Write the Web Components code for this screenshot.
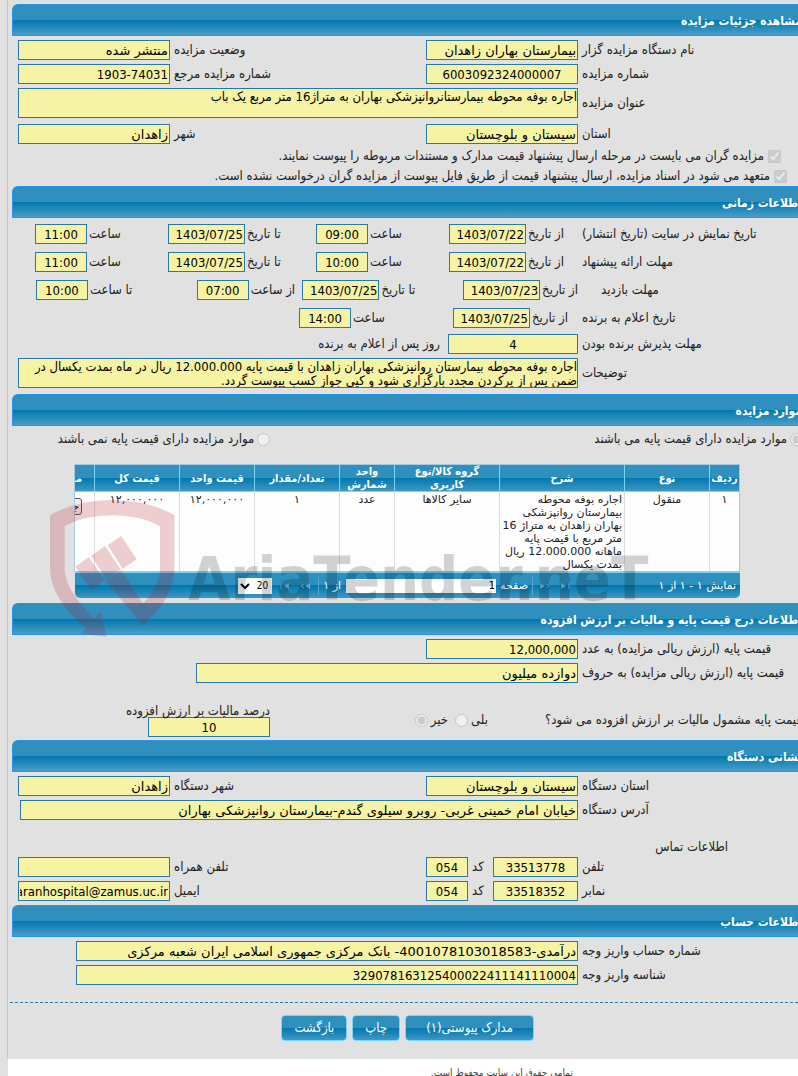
<!DOCTYPE html>
<html lang="fa">
<head>
<meta charset="utf-8">
<title>مشاهده جزئیات مزایده</title>
<style>
html { overflow-x: hidden; background: #fff; }
body { margin: 0; font: 13px/16px "DejaVu Sans Condensed", "DejaVu Sans", sans-serif; color: #222; }
</style>
</head>
<body>
<auction-page></auction-page>
<script>
const BASE = `
*, *::before, *::after { box-sizing: border-box; }
:host { display: block; }
:host([hidden]) { display: none; }
label, span { white-space: nowrap; }
input:not([type=radio]):not([type=checkbox]), textarea {
  display: block; width: 100%; height: 20px; margin: 0; padding: 0 1px; border: 1px solid #2779aa; border-radius: 0;
  background: #f6f3a5; color: #000; font: 13px/18px "DejaVu Sans Condensed", "DejaVu Sans", sans-serif;
  direction: rtl; outline: none; resize: none; overflow: hidden;
}
input.fa:not([type=radio]):not([type=checkbox]) { font-family: "DejaVu Sans", sans-serif; }
input[type=radio], input[type=checkbox] { width: 13px; height: 13px; margin: 0; flex: none; }
`;
class Base extends HTMLElement {
  connectedCallback() {
    if (this.shadowRoot) return;
    const t = document.createElement('template');
    t.innerHTML = `<style>${BASE}${this.css()}</style>${this.html()}`;
    this.attachShadow({ mode: 'open' }).append(t.content.cloneNode(true));
  }
  a(n, d = '') { return this.getAttribute(n) ?? d; }
  css() { return ''; }
  html() { return '<slot></slot>'; }
}

/* Titled block with a glossy bar */
customElements.define('auction-section', class extends Base {
  css() { return `
    h2 { margin: 0; height: 32px; border: 1px solid #2694e8; border-right: 0; border-top-left-radius: 6px;
      background: linear-gradient(#2f90be 0 50%, #0078ae 50%, #4a9dc8 100%);
      font-size: 12px; line-height: 32px; font-weight: bold; color: #fff; white-space: nowrap; }
    div { padding: 2px 0 0 6px; }`; }
  html() { return `<h2>${this.a('heading')}</h2><div><slot></slot></div>`; }
});

/* Two label/field pairs per line */
customElements.define('form-row', class extends Base {
  css() { return `
    :host { display: grid; grid-template-columns: 220fr 152fr 248fr 152fr; column-gap: 4px; align-items: center; min-height: 24px; }
    :host([area]) { padding: 2px 0 4px; }`; }
});

customElements.define('form-field', class extends Base {
  css() { return `
    :host { display: contents; }
    label { text-align: left; min-width: 0; }
    .box { min-width: 0; }
    .wide { grid-column: 2 / -1; display: flex; align-items: center; gap: 8px; }
    textarea { height: 30px; line-height: 14px; padding: 1px 0; }`; }
  html() {
    const v = this.a('value'), w = this.a('width'), al = this.a('align', 'right');
    const fa = /[\u0620-\u06cf]/.test(v) ? 'fa' : '';
    const c = this.hasAttribute('area')
      ? `<textarea id="f" readonly>${v}</textarea>`
      : `<input id="f" class="${fa}" type="text" readonly value="${v}" style="text-align:${al}${w ? `;max-width:${w}px` : ''}">`;
    return `<label for="f">${this.a('label')}</label><div class="box ${this.hasAttribute('wide') ? 'wide' : ''}">${c}<slot></slot></div>`;
  }
});

/* Label hugging a short date or time field */
customElements.define('time-pair', class extends Base {
  css() { return `
    :host { display: flex; align-items: center; justify-content: flex-end; gap: 2px; }
    input { flex: none; }`; }
  html() {
    const d = this.hasAttribute('date');
    return `<label for="t">${this.a('label')}</label><input id="t" type="text" readonly value="${this.a('value')}" style="width:${d ? 77 : 52}px;text-align:${d ? 'right' : 'center'}">`;
  }
});
customElements.define('time-row', class extends Base {
  css() { return `
    :host { display: grid; grid-template-columns: 220fr 560fr; column-gap: 4px; align-items: center; height: 28px; }
    span { text-align: left; }
    .inset { padding-left: 19px; }
    div { display: grid; grid-template-columns: 129fr 133fr 148fr 133fr 17fr; }
    div.visit { grid-template-columns: 114fr 161fr 106fr 161fr 18fr; }
    div.winner { grid-template-columns: 125fr 154fr 281fr; }`; }
  html() {
    const k = this.a('kind');
    return `<span class="${k === 'visit' ? 'inset' : ''}">${this.a('label')}</span><div class="${k}"><slot></slot></div>`;
  }
});

customElements.define('phone-field', class extends Base {
  css() { return `
    :host { display: contents; }
    .main { text-align: left; }
    div { display: flex; align-items: center; gap: 4px; }
    #n { width: 85px; flex: none; text-align: center; }
    #c { width: 42px; flex: none; text-align: center; }
    .code { flex: 1; text-align: left; }`; }
  html() { return `<label class="main" for="n">${this.a('label')}</label><div><input id="n" readonly value="${this.a('value')}"><label class="code" for="c">کد</label><input id="c" readonly value="${this.a('code')}"></div>`; }
});

customElements.define('choice-item', class extends Base {
  css() { return `
    :host { display: flex; align-items: center; gap: 4px; height: 20px; }
    :host([type=radio]) { gap: 3px; }
    :host([reverse]) { flex-direction: row-reverse; justify-content: flex-end; }`; }
  html() { return `<input id="x" type="${this.a('type')}" disabled ${this.hasAttribute('on') ? 'checked' : ''}><label for="x">${this.a('label')}</label>`; }
});

customElements.define('glossy-button', class extends Base {
  css() { return `
    button { height: 26px; padding: 0 ${this.a('pad', '12')}px; border: 1px solid #77d5f7; border-radius: 4px;
      background: linear-gradient(#2f90be 0 50%, #0078ae 50%, #3f97c4 100%);
      color: #fff; font: 13px/22px "DejaVu Sans Condensed", "DejaVu Sans", sans-serif; direction: rtl; white-space: nowrap; display: block; }`; }
  html() { return `<button type="button"><slot></slot></button>`; }
});

/* Items table with its pager */
customElements.define('goods-grid', class extends Base {
  css() { return `
    :host { margin: 15px 62px 5px 56px; font: 11px/13px "DejaVu Sans", sans-serif; }
    .view { overflow: hidden; border: 1px solid #a6c9e2; border-bottom: 0; background: #fdfdfd; }
    table { width: 713px; table-layout: fixed; border-collapse: separate; border-spacing: 0; }
    th { height: 27px; padding: 0; border-left: 1px solid #77d5f7; border-bottom: 1px solid #77d5f7; color: #fff; font: bold 11px/13px "DejaVu Sans Condensed", "DejaVu Sans", sans-serif;
      background: linear-gradient(#2f90be 0 50%, #0078ae 50%, #3f97c4 100%); }
    td { height: 79px; padding: 1px 2px 0; vertical-align: top; text-align: center; border-left: 1px solid #ddd; color: #222; }
    td.desc { text-align: right; white-space: nowrap; }
    td button { float: right; margin: 5px 10px 0 0; height: 17px; padding: 0 2px; font: inherit; border: 1px solid #555; border-radius: 3px; background: #efefef; }
    .pager { margin-left: 1px; height: 27px; border-top: 2px solid #77d5f7; border-radius: 0 0 5px 5px; padding: 0 4px; display: flex; align-items: center;
      background: linear-gradient(#2f90be 0 50%, #0078ae 50%, #3f97c4 100%); color: #fff; }
    .info { width: 165px; }
    .pager svg { width: 10px; height: 8px; flex: none; margin-left: 11px; fill: #6fb9de; stroke: #6fb9de; }
    .pager svg.tight { margin-left: 7px; }
    i { width: 1px; height: 18px; background: #5aa5cf; margin: 0 0 0 4px; flex: none; }
    .pager input:not([type=radio]) { width: 150px; height: 14px; border: 0; background: #fff; font-size: 11px; line-height: 14px; margin: 0 4px 0 5px; }
    i.after { margin: 0 4px 0 8px; }
    select { width: 34px; height: 16px; margin: 0; padding: 0; border: 0; border-radius: 0; background: #fff; color: #000; font: 10px/16px "DejaVu Sans Condensed", "DejaVu Sans", sans-serif; direction: rtl; }`; }
  html() {
    const cols = [['ردیف', 30], ['نوع', 85], ['شرح', 125], ['گروه کالا/نوع<br>کاربری', 105], ['واحد<br>شمارش', 55], ['تعداد/مقدار', 85], ['قیمت واحد', 75], ['قیمت کل', 85], ['مستندات', 68]];
    return `<div class="view"><table>
      <colgroup>${cols.map(c => `<col style="width:${c[1]}px">`).join('')}</colgroup>
      <thead><tr>${cols.map(c => `<th>${c[0]}</th>`).join('')}</tr></thead>
      <tbody><tr><td>۱</td><td>منقول</td>
      <td class="desc">اجاره بوفه محوطه<br>بیمارستان روانپزشکی<br>بهاران زاهدان به متراژ 16<br>متر مربع با قیمت پایه<br>ماهانه 12.000.000 ریال<br>بمدت یکسال</td>
      <td>سایر کالاها</td><td>عدد</td><td>۱</td><td>۱۲,۰۰۰,۰۰۰</td><td>۱۲,۰۰۰,۰۰۰</td><td><button type="button">جزئیات</button></td></tr></tbody>
      </table></div>
      <div class="pager"><span class="info">نمایش ۱ - ۱ از ۱</span>
      <svg viewBox="0 0 10 8"><path d="M0 1L5 4L0 7Z" stroke="none"/><path d="M8 1V7"/></svg>
      <svg class="tight" viewBox="0 0 10 8"><path d="M0 1L5 4L0 7Z" stroke="none"/><path d="M6 2L9 4L6 6" fill="none"/></svg>
      <i></i><label for="pg">صفحه</label><input id="pg" value="1"><span>از ۱</span><i class="after"></i>
      <svg viewBox="0 0 10 8"><path d="M10 1L5 4L10 7Z" stroke="none"/><path d="M4 2L1 4L4 6" fill="none"/></svg>
      <svg class="tight" viewBox="0 0 10 8"><path d="M10 1L5 4L10 7Z" stroke="none"/><path d="M2 1V7"/></svg>
      <select aria-label="تعداد"><option>20</option></select></div>`;
  }
});

/* Translucent site mark laid over the items table */
customElements.define('site-mark', class extends Base {
  css() { return `
    :host { position: absolute; left: 30px; top: 94px; width: 612px; height: 156px; pointer-events: none; z-index: 2; direction: ltr; }
    svg { display: block; width: 612px; height: 156px; overflow: visible; }
    text { font: bold 61px "DejaVu Sans Condensed", "DejaVu Sans", sans-serif; }`; }
  html() { return `<svg viewBox="0 0 612 156" aria-hidden="true">
    <g fill="#b4141e" opacity=".2" transform="translate(2 2) scale(.3333)">
      <path d="M18 75Q100 30 205 30Q310 30 391 75V235Q391 325 297 407L185 272L232 240L297 341Q348 285 348 235V108Q290 76 205 76Q120 76 62 108V235Q62 300 150 385L170 364L188 440L110 432L127 416Q18 325 18 235Z"/>
      <path d="M94 230L134 202L183 270L142 300ZM141 198L183 168L230 238L188 268ZM191 166L232 138L278 208L236 236Z"/>
    </g>
    <text x="146" y="112" fill="#000" opacity=".17">AriaTender.neT</text></svg>`; }
});

customElements.define('auction-page', class extends Base {
  css() { return `
    :host { background: #e1e1e1; overflow: hidden; }
    main { margin: 0 -4px 0 7px; padding: 4px 0 0 4px; border-left: 1px solid #c6c6c6; direction: rtl; }
    .marked { position: relative; }
    .choices { display: grid; grid-template-columns: 532fr 252fr; padding-top: 1px; margin-right: -1px; }
    .c1 { padding-right: 21px; } .c2 { padding-right: 15px; }
    .tax { display: grid; grid-template-columns: 314fr 40fr 178fr 252fr; height: 55px; padding-top: 18px; }
    .tax .q { padding-top: 9px; }
    .tax choice-item { margin-top: 7px; }
    .rate input:not([type=radio]) { width: 122px; text-align: center; }
    .rate label { display: block; margin-bottom: -2px; }
    .contact { padding: 17px 74px 0 0; height: 33px; }
    .rule { margin: 15px 0 0 -2px; height: 1px; background: repeating-linear-gradient(90deg, #2779aa 0 3px, transparent 3px 5px); }
    .buttons { display: flex; gap: 5px; padding: 12px 268px 18px 0; }
    footer { margin: 0 0 0 8px; height: 17px; padding: 7px 225px 0 0; overflow: hidden; background: #fff; color: #444; font-size: 10px; line-height: 14px; direction: rtl; }
    .end { height: 2px; }`; }
  html() { return `
  <main>
    <auction-section heading="مشاهده جزئیات مزایده">
      <form-row><form-field label="نام دستگاه مزایده گزار" value="بیمارستان بهاران زاهدان"></form-field><form-field label="وضعیت مزایده" value="منتشر شده"></form-field></form-row>
      <form-row><form-field label="شماره مزایده" value="6003092324000007" align="center"></form-field><form-field label="شماره مزایده مرجع" value="1903-74031"></form-field></form-row>
      <form-row area><form-field wide area label="عنوان مزایده" value="اجاره بوفه محوطه بیمارستانروانپزشکی بهاران به متراژ16 متر مربع یک باب"></form-field></form-row>
      <form-row><form-field label="استان" value="سیستان و بلوچستان"></form-field><form-field label="شهر" value="زاهدان"></form-field></form-row>
      <choice-item class="c1" type="checkbox" on label="مزایده گران می بایست در مرحله ارسال پیشنهاد قیمت مدارک و مستندات مربوطه را پیوست نمایند."></choice-item>
      <choice-item class="c2" type="checkbox" on label="متعهد می شود در اسناد مزایده، ارسال پیشنهاد قیمت از طریق فایل پیوست از مزایده گران درخواست نشده است."></choice-item>
    </auction-section>
    <auction-section heading="اطلاعات زمانی">
      <time-row label="تاریخ نمایش در سایت (تاریخ انتشار)"><time-pair date label="از تاریخ" value="1403/07/22"></time-pair><time-pair label="ساعت" value="09:00"></time-pair><time-pair date label="تا تاریخ" value="1403/07/25"></time-pair><time-pair label="ساعت" value="11:00"></time-pair></time-row>
      <time-row label="مهلت ارائه پیشنهاد"><time-pair date label="از تاریخ" value="1403/07/22"></time-pair><time-pair label="ساعت" value="10:00"></time-pair><time-pair date label="تا تاریخ" value="1403/07/25"></time-pair><time-pair label="ساعت" value="11:00"></time-pair></time-row>
      <time-row kind="visit" label="مهلت بازدید"><time-pair date label="از تاریخ" value="1403/07/23"></time-pair><time-pair date label="تا تاریخ" value="1403/07/25"></time-pair><time-pair label="از ساعت" value="07:00"></time-pair><time-pair label="تا ساعت" value="10:00"></time-pair></time-row>
      <time-row kind="winner" label="تاریخ اعلام به برنده"><time-pair date label="از تاریخ" value="1403/07/25"></time-pair><time-pair label="ساعت" value="14:00"></time-pair></time-row>
      <form-row><form-field wide width="130" align="center" label="مهلت پذیرش برنده بودن" value="4"><span>روز پس از اعلام به برنده</span></form-field></form-row>
      <form-row area><form-field wide area label="توضیحات" value="اجاره بوفه محوطه بیمارستان روانپزشکی بهاران زاهدان با قیمت پایه 12.000.000 ریال در ماه بمدت یکسال در ضمن پس از پرکردن مجدد بارگزاری شود و کپی جواز کسب پیوست گردد."></form-field></form-row>
      <div class="end"></div>
    </auction-section>
    <auction-section class="marked" heading="موارد مزایده">
      <div class="choices"><choice-item type="radio" on label="موارد مزایده دارای قیمت پایه می باشند"></choice-item><choice-item type="radio" label="موارد مزایده دارای قیمت پایه نمی باشند"></choice-item></div>
      <goods-grid></goods-grid>
      <site-mark></site-mark>
    </auction-section>
    <auction-section heading="اطلاعات درج قیمت پایه و مالیات بر ارزش افزوده">
      <form-row><form-field label="قیمت پایه (ارزش ریالی مزایده) به عدد" value="12,000,000"></form-field></form-row>
      <form-row><form-field wide width="382" label="قیمت پایه (ارزش ریالی مزایده) به حروف" value="دوازده میلیون"></form-field></form-row>
      <div class="tax">
        <span class="q">قیمت پایه مشمول مالیات بر ارزش افزوده می شود؟</span>
        <choice-item type="radio" reverse label="بلی"></choice-item>
        <choice-item type="radio" on reverse label="خیر"></choice-item>
        <div class="rate"><label for="rate">درصد مالیات بر ارزش افزوده</label><input id="rate" readonly value="10"></div>
      </div>
    </auction-section>
    <auction-section heading="نشانی دستگاه">
      <form-row><form-field label="استان دستگاه" value="سیستان و بلوچستان"></form-field><form-field label="شهر دستگاه" value="زاهدان"></form-field></form-row>
      <form-row><form-field wide width="558" label="آدرس دستگاه" value="خیابان امام خمینی غربی- روبرو سیلوی گندم-بیمارستان روانپزشکی بهاران"></form-field></form-row>
      <div class="contact">اطلاعات تماس</div>
      <form-row><phone-field label="تلفن" value="33513778" code="054"></phone-field><form-field label="تلفن همراه" value=""></form-field></form-row>
      <form-row><phone-field label="نمابر" value="33518352" code="054"></phone-field><form-field label="ایمیل" value="baharanhospital@zamus.uc.ir"></form-field></form-row>
      <div class="end"></div>
    </auction-section>
    <auction-section heading="اطلاعات حساب">
      <form-row><form-field wide width="502" label="شماره حساب واریز وجه" value="درآمدی-4001078103018583- بانک مرکزی جمهوری اسلامی ایران شعبه مرکزی"></form-field></form-row>
      <form-row><form-field wide width="502" label="شناسه واریز وجه" value="329078163125400022411141110004"></form-field></form-row>
    </auction-section>
    <div class="rule" role="separator"></div>
    <div class="buttons"><glossy-button pad="20">مدارک پیوستی(۱)</glossy-button><glossy-button>چاپ</glossy-button><glossy-button>بازگشت</glossy-button></div>
  </main>
  <footer>تمامی حقوق این سایت محفوظ است.</footer>`; }
});
</script>
</body>
</html>
